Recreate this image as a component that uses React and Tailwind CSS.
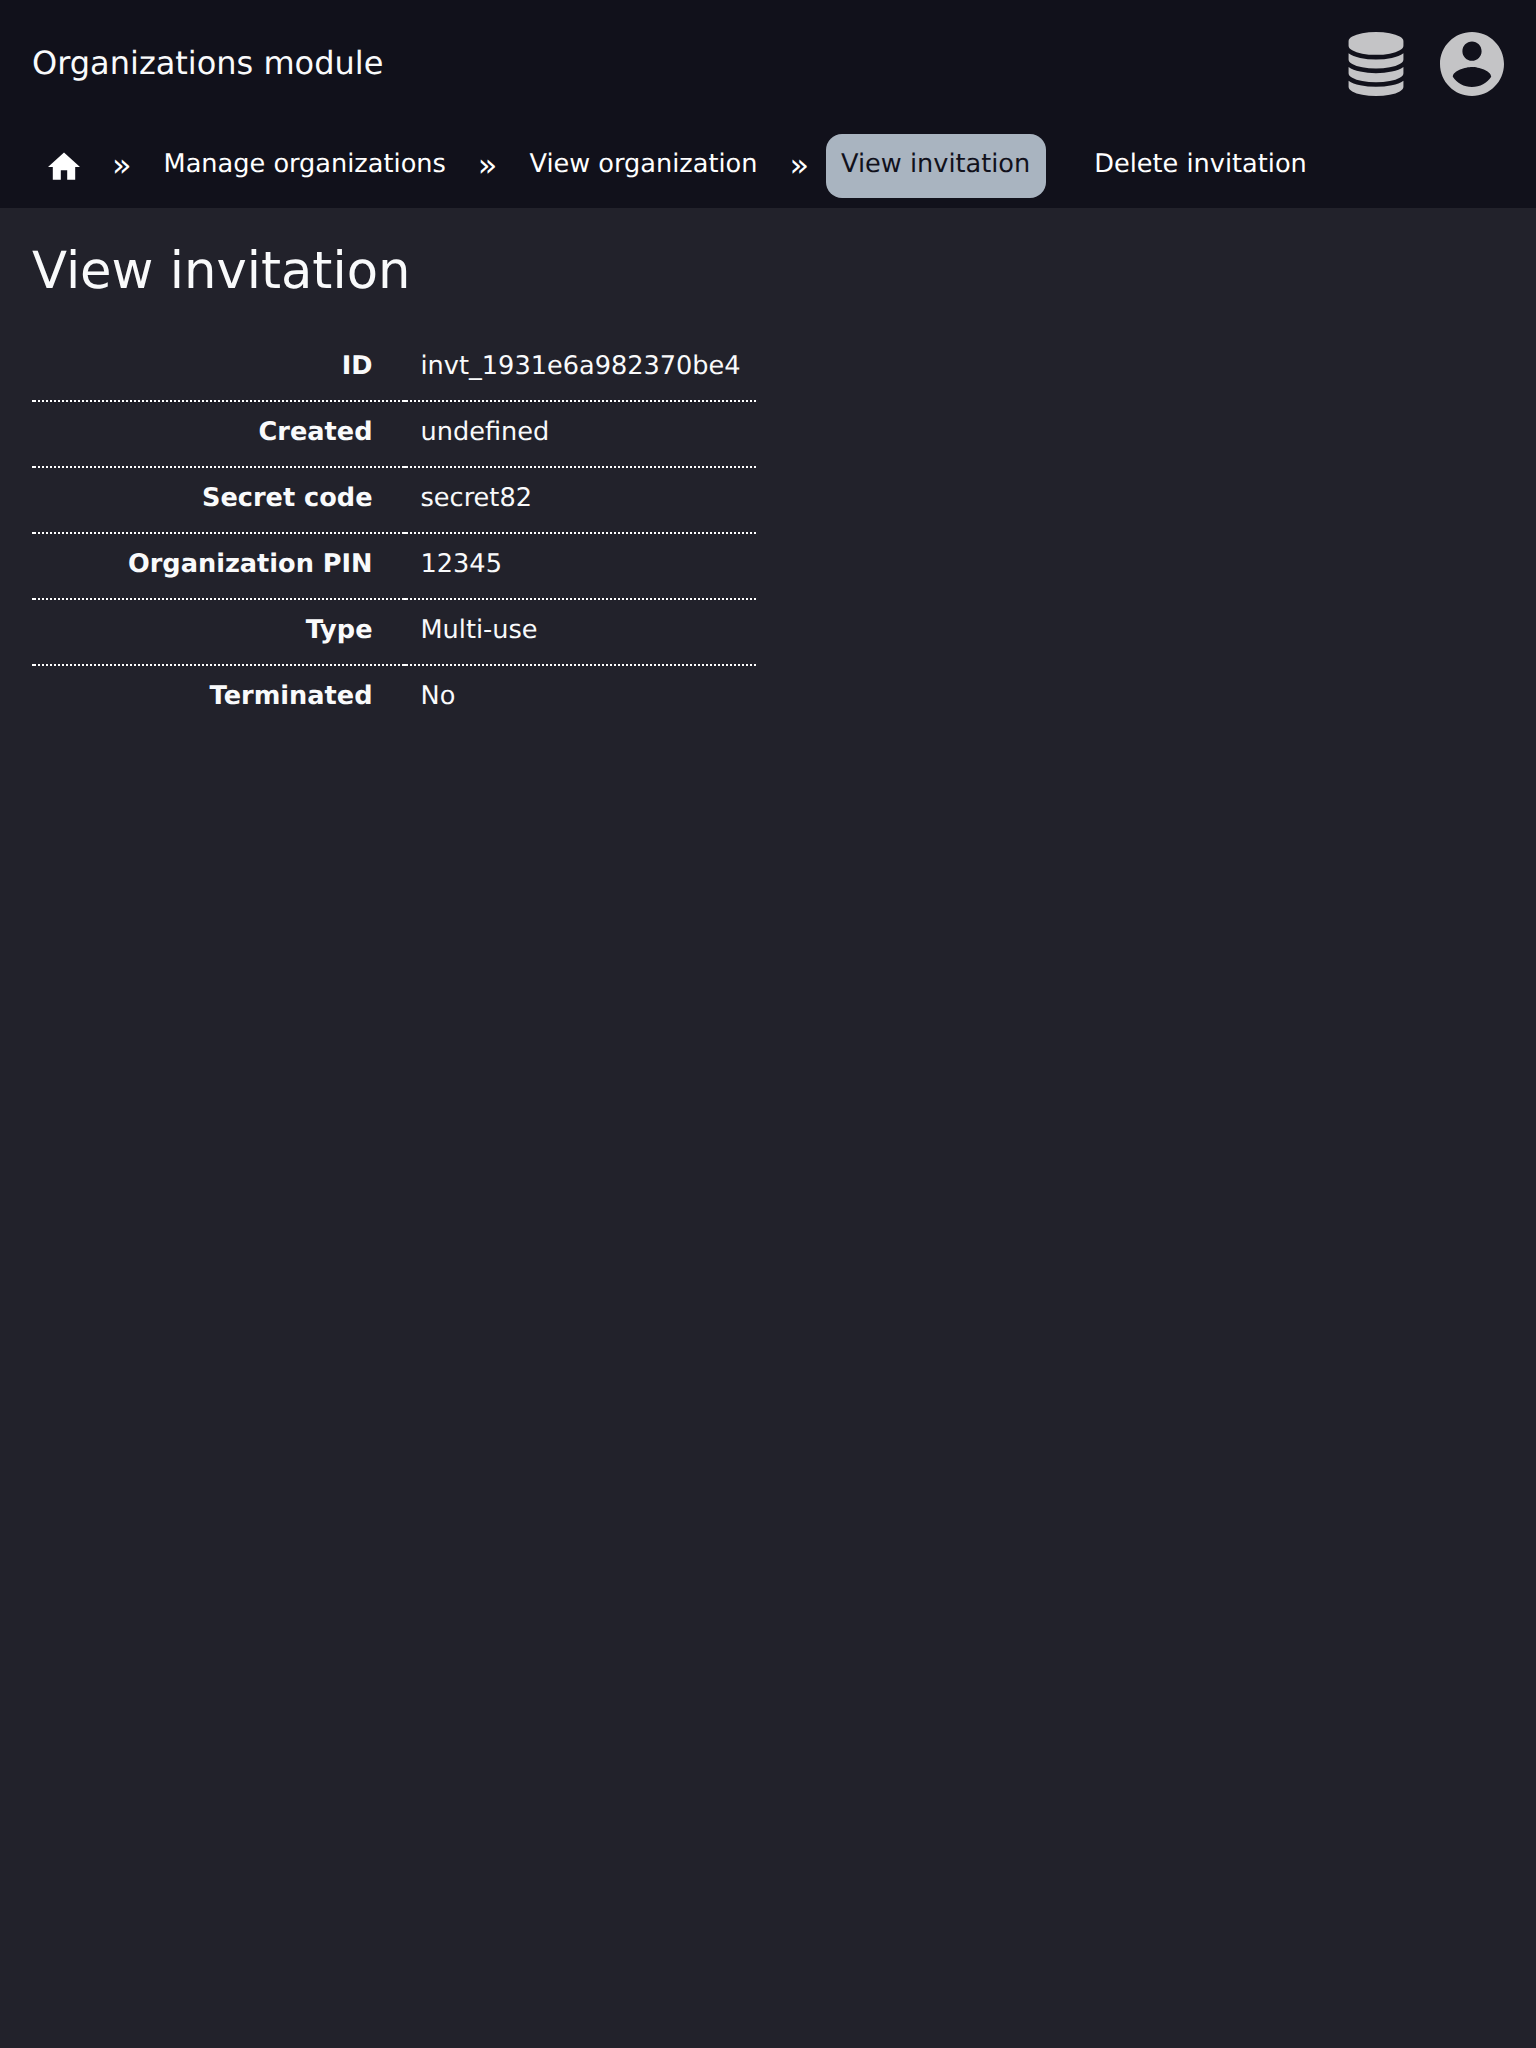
const rows = [
  ["ID", "invt_1931e6a982370be4"],
  ["Created", "undefined"],
  ["Secret code", "secret82"],
  ["Organization PIN", "12345"],
  ["Type", "Multi-use"],
  ["Terminated", "No"],
];

function HomeIcon() {
  return (
    <svg viewBox="2 2 20 20" className="size-8" fill="#fff">
      <path d="M10 20v-6h4v6h5v-8h3L12 3 2 12h3v8z" />
    </svg>
  );
}

function DatabaseIcon() {
  return (
    <svg viewBox="0 0 1536 1792" className="size-16" fill="#c4c4c6">
      <path d="M768 768q237 0 443-43t325-127v170q0 69-103 128t-280 93.5-385 34.5-385-34.5-280-93.5-103-128v-170q119 84 325 127t443 43zm0 768q237 0 443-43t325-127v170q0 69-103 128t-280 93.5-385 34.5-385-34.5-280-93.5-103-128v-170q119 84 325 127t443 43zm0-384q237 0 443-43t325-127v170q0 69-103 128t-280 93.5-385 34.5-385-34.5-280-93.5-103-128v-170q119 84 325 127t443 43zm0-1152q208 0 385 34.5t280 93.5 103 128v128q0 69-103 128t-280 93.5-385 34.5-385-34.5-280-93.5-103-128v-128q0-69 103-128t280-93.5 385-34.5z" />
    </svg>
  );
}

function AccountIcon() {
  return (
    <svg viewBox="2 2 20 20" className="size-16" fill="#c4c4c6">
      <path d="M12 2C6.48 2 2 6.48 2 12s4.48 10 10 10 10-4.48 10-10S17.52 2 12 2zm0 3c1.66 0 3 1.34 3 3s-1.34 3-3 3-3-1.34-3-3 1.34-3 3-3zm0 14.2c-2.5 0-4.71-1.28-6-3.22.03-1.99 4-3.08 6-3.08 1.99 0 5.97 1.09 6 3.08-1.29 1.94-3.5 3.22-6 3.22z" />
    </svg>
  );
}

function Separator() {
  return <span className="px-4 pt-[13px] text-[32px] leading-9">»</span>;
}

function NavItem({ children, active }) {
  return (
    <a
      className={
        active
          ? "ml-[0.5px] block h-16 rounded-2xl bg-[#a9b4c0] pt-[15px] pr-4 pl-[15.5px] leading-[30px] text-[#11111b]"
          : "block h-16 px-4 pt-[15px] leading-[30px]"
      }
    >
      {children}
    </a>
  );
}

const dottedLine =
  "group-last:bg-none bg-[linear-gradient(white,white),repeating-linear-gradient(90deg,transparent_0_2px,white_2px_4px)] bg-[length:2px_2px,100%_2px] bg-[position:left_bottom] bg-no-repeat";

export default function App() {
  return (
    <div className="min-h-screen bg-[#22222b] font-['DejaVu_Sans',sans-serif] text-[25.6px] text-[#f9fafb] [text-rendering:geometricPrecision]">
      <header className="h-52 bg-[#11111b]">
        <div className="flex h-32 items-center justify-between px-8">
          <div className="pb-0.5 text-[32px] leading-10">Organizations module</div>
          <div className="flex gap-8">
            <DatabaseIcon />
            <AccountIcon />
          </div>
        </div>
        <nav className="flex px-8 pt-1.5 whitespace-nowrap text-white">
          <a className="flex h-16 w-16 items-center justify-center pt-0.5">
            <HomeIcon />
          </a>
          <Separator />
          <NavItem>Manage organizations</NavItem>
          <Separator />
          <NavItem>View organization</NavItem>
          <Separator />
          <NavItem active>View invitation</NavItem>
          <div className="ml-8">
            <NavItem>Delete invitation</NavItem>
          </div>
        </nav>
      </header>
      <main className="px-8 pt-[31px]">
        <h1 className="text-[51.2px] leading-16">View invitation</h1>
        <table className="mt-[33px] w-[724px] table-fixed border-separate border-spacing-0 leading-[30px]">
          <tbody>
            {rows.map(([label, value]) => (
              <tr key={label} className="group">
                <th className={`w-[372px] pt-[15px] pr-[31.5px] pb-[21px] text-right font-bold ${dottedLine}`}>
                  {label}
                </th>
                <td className={`pt-[15px] pr-[15px] pb-[21px] pl-[16.5px] ${dottedLine}`}>{value}</td>
              </tr>
            ))}
          </tbody>
        </table>
      </main>
    </div>
  );
}
